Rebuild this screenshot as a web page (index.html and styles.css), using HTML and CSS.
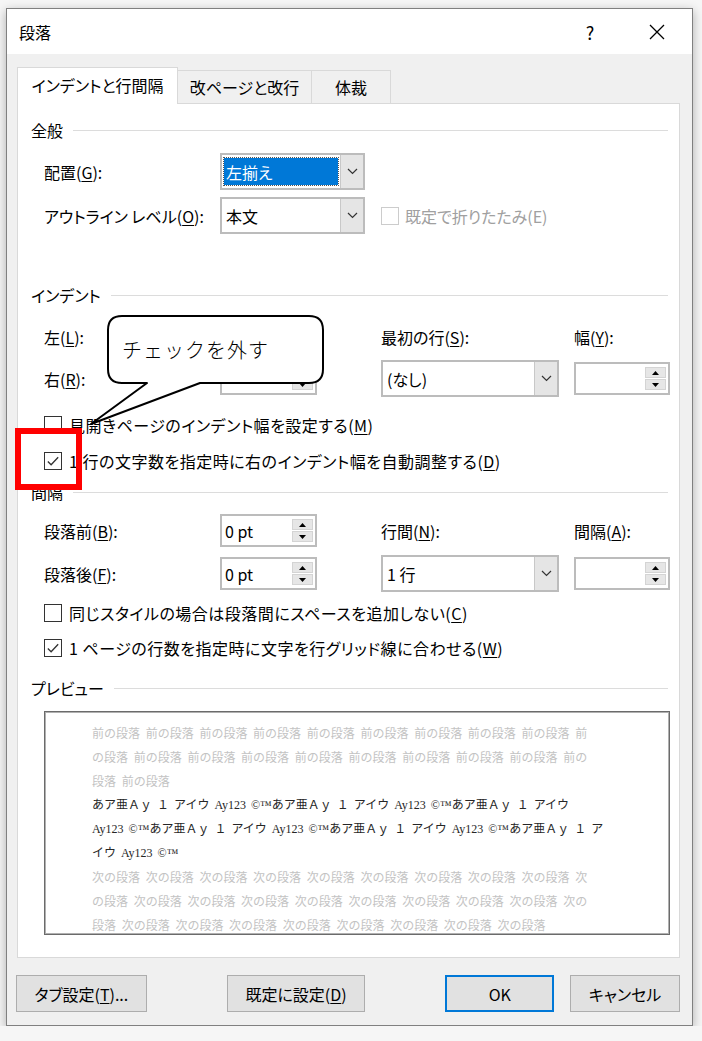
FILE: index.html
```html
<!DOCTYPE html>
<html lang="ja">
<head>
    <meta charset="UTF-8">
    <meta name="viewport" content="width=device-width, initial-scale=1.0">
    <title>段落</title>
    <link rel="stylesheet" href="styles.css">
</head>
<body>
    <div class="window">
        <!-- タイトルバー -->
        <div class="titlebar">
            <span class="title">段落</span>
            <span class="help">?</span>
            <span class="close">
                <svg width="16" height="16" viewBox="0 0 16 16"><path d="M1 1 L15 15 M15 1 L1 15" stroke="#000" stroke-width="1.3" fill="none"/></svg>
            </span>
        </div>

        <div class="content">
            <div class="tabs">
                <div class="tab active">インデントと行間隔</div>
                <div class="tab tab2">改ページと改行</div>
                <div class="tab tab3">体裁</div>
            </div>

            <div class="panel">
                <!-- 全般 -->
                <div class="group-head first">全般</div>
                <div class="grid general">
                    <span class="label">配置(<u>G</u>):</span>
                    <div class="combo short">
                        <span class="value"><span class="selected">左揃え</span></span>
                        <span class="arrow"><svg width="11" height="7" viewBox="0 0 11 7"><polyline points="1,1 5.5,5.5 10,1" stroke="#333" stroke-width="1.2" fill="none"/></svg></span>
                    </div>
                    <span class="label">アウトライン レベル(<u>O</u>):</span>
                    <div class="combo short">
                        <span class="value">本文</span>
                        <span class="arrow"><svg width="11" height="7" viewBox="0 0 11 7"><polyline points="1,1 5.5,5.5 10,1" stroke="#333" stroke-width="1.2" fill="none"/></svg></span>
                    </div>
                    <div class="check disabled wide">
                        <span class="box"></span>
                        <span>既定で折りたたみ(E)</span>
                    </div>
                </div>

                <!-- インデント -->
                <div class="group-head indent-head">インデント</div>
                <div class="grid indent">
                    <span class="label">左(<u>L</u>):</span>
                    <div class="spin">
                        <span class="num"></span>
                        <span class="btns">
                            <span class="sbtn"><svg width="7" height="4" viewBox="0 0 7 4"><polygon points="0,4 3.5,0 7,4" fill="#000"/></svg></span>
                            <span class="sbtn"><svg width="7" height="4" viewBox="0 0 7 4"><polygon points="0,0 3.5,4 7,0" fill="#000"/></svg></span>
                        </span>
                    </div>
                    <span class="label">最初の行(<u>S</u>):</span>
                    <span class="label">幅(<u>Y</u>):</span>

                    <span class="label">右(<u>R</u>):</span>
                    <div class="spin">
                        <span class="num"></span>
                        <span class="btns">
                            <span class="sbtn"><svg width="7" height="4" viewBox="0 0 7 4"><polygon points="0,4 3.5,0 7,4" fill="#000"/></svg></span>
                            <span class="sbtn"><svg width="7" height="4" viewBox="0 0 7 4"><polygon points="0,0 3.5,4 7,0" fill="#000"/></svg></span>
                        </span>
                    </div>
                    <div class="combo long">
                        <span class="value">(なし)</span>
                        <span class="arrow"><svg width="11" height="7" viewBox="0 0 11 7"><polyline points="1,1 5.5,5.5 10,1" stroke="#333" stroke-width="1.2" fill="none"/></svg></span>
                    </div>
                    <div class="spin last">
                        <span class="num"></span>
                        <span class="btns">
                            <span class="sbtn"><svg width="7" height="4" viewBox="0 0 7 4"><polygon points="0,4 3.5,0 7,4" fill="#000"/></svg></span>
                            <span class="sbtn"><svg width="7" height="4" viewBox="0 0 7 4"><polygon points="0,0 3.5,4 7,0" fill="#000"/></svg></span>
                        </span>
                    </div>
                </div>
                <div class="checks indent-checks">
                    <div class="check">
                        <span class="box"></span>
                        <span class="text">見開きページのインデント幅を設定する(<u>M</u>)</span>
                    </div>
                    <div class="check">
                        <span class="box"><svg width="17" height="17" viewBox="0 0 17 17"><polyline points="3,8.5 6.5,12 14,4" stroke="#333" stroke-width="1.4" fill="none"/></svg></span>
                        <span class="text">1 行の文字数を指定時に右のインデント幅を自動調整する(<u>D</u>)</span>
                    </div>
                </div>

                <!-- 間隔 -->
                <div class="group-head space-head">間隔</div>
                <div class="grid spacing">
                    <span class="label">段落前(<u>B</u>):</span>
                    <div class="spin">
                        <span class="num">0 pt</span>
                        <span class="btns">
                            <span class="sbtn"><svg width="7" height="4" viewBox="0 0 7 4"><polygon points="0,4 3.5,0 7,4" fill="#000"/></svg></span>
                            <span class="sbtn"><svg width="7" height="4" viewBox="0 0 7 4"><polygon points="0,0 3.5,4 7,0" fill="#000"/></svg></span>
                        </span>
                    </div>
                    <span class="label">行間(<u>N</u>):</span>
                    <span class="label">間隔(<u>A</u>):</span>

                    <span class="label">段落後(<u>F</u>):</span>
                    <div class="spin">
                        <span class="num">0 pt</span>
                        <span class="btns">
                            <span class="sbtn"><svg width="7" height="4" viewBox="0 0 7 4"><polygon points="0,4 3.5,0 7,4" fill="#000"/></svg></span>
                            <span class="sbtn"><svg width="7" height="4" viewBox="0 0 7 4"><polygon points="0,0 3.5,4 7,0" fill="#000"/></svg></span>
                        </span>
                    </div>
                    <div class="combo long">
                        <span class="value">1 行</span>
                        <span class="arrow"><svg width="11" height="7" viewBox="0 0 11 7"><polyline points="1,1 5.5,5.5 10,1" stroke="#333" stroke-width="1.2" fill="none"/></svg></span>
                    </div>
                    <div class="spin last">
                        <span class="num"></span>
                        <span class="btns">
                            <span class="sbtn"><svg width="7" height="4" viewBox="0 0 7 4"><polygon points="0,4 3.5,0 7,4" fill="#000"/></svg></span>
                            <span class="sbtn"><svg width="7" height="4" viewBox="0 0 7 4"><polygon points="0,0 3.5,4 7,0" fill="#000"/></svg></span>
                        </span>
                    </div>
                </div>
                <div class="checks space-checks">
                    <div class="check">
                        <span class="box"></span>
                        <span class="text">同じスタイルの場合は段落間にスペースを追加しない(<u>C</u>)</span>
                    </div>
                    <div class="check">
                        <span class="box"><svg width="17" height="17" viewBox="0 0 17 17"><polyline points="3,8.5 6.5,12 14,4" stroke="#333" stroke-width="1.4" fill="none"/></svg></span>
                        <span class="text">1 ページの行数を指定時に文字を行グリッド線に合わせる(<u>W</u>)</span>
                    </div>
                </div>

                <!-- プレビュー -->
                <div class="group-head preview-head">プレビュー</div>
                <div class="preview">
                    <div class="pline grey">前の段落 前の段落 前の段落 前の段落 前の段落 前の段落 前の段落 前の段落 前の段落 前</div>
                    <div class="pline grey">の段落 前の段落 前の段落 前の段落 前の段落 前の段落 前の段落 前の段落 前の段落 前の</div>
                    <div class="pline grey">段落 前の段落</div>
                    <div class="pline sample">あア亜Ａｙ １ アイウ Ay123 ©™あア亜Ａｙ １ アイウ Ay123 ©™あア亜Ａｙ １ アイウ</div>
                    <div class="pline sample">Ay123 ©™あア亜Ａｙ １ アイウ Ay123 ©™あア亜Ａｙ １ アイウ Ay123 ©™あア亜Ａｙ １ ア</div>
                    <div class="pline sample">イウ Ay123 ©™</div>
                    <div class="pline grey">次の段落 次の段落 次の段落 次の段落 次の段落 次の段落 次の段落 次の段落 次の段落 次</div>
                    <div class="pline grey">の段落 次の段落 次の段落 次の段落 次の段落 次の段落 次の段落 次の段落 次の段落 次の</div>
                    <div class="pline grey">段落 次の段落 次の段落 次の段落 次の段落 次の段落 次の段落 次の段落 次の段落</div>
                </div>
            </div>

            <div class="btn-row">
                <div class="btn b-tab">タブ設定(<u>T</u>)...</div>
                <div class="btn b-default">既定に設定(<u>D</u>)</div>
                <div class="btn b-ok">OK</div>
                <div class="btn b-cancel">キャンセル</div>
            </div>
        </div>

        <!-- 吹き出し -->
        <div class="callout">
            <svg width="250" height="115" viewBox="0 0 250 115">
                <path d="M42 2 H229 Q243 2 243 16 V55 Q243 69 229 69 H120 L11 110 L67 69 H42 Q28 69 28 55 V16 Q28 2 42 2 Z" fill="#fff" stroke="#000" stroke-width="2" stroke-linejoin="round"/>
            </svg>
            <span class="callout-text">チェックを外す</span>
        </div>
        <!-- 赤枠 -->
        <div class="redbox"></div>
    </div>
</body>
</html>
```

FILE: styles.css
```css
*{
    margin: 0;
    padding: 0;
    box-sizing: border-box;
}
body{
    background-color: #f6f6f6;
    font-family: "Noto Sans CJK JP", "Noto Sans", sans-serif;
    font-size: 16px;
    line-height: 20px;
    font-feature-settings: "palt";
    color: #000;
}
u{
    text-underline-offset: 2px;
}
.window{
    position: relative;
    margin: 8px 0 0 6px;
    width: 687px;
    height: 1018px;
    background-color: #f0f0f0;
    border: 1px solid #808080;
    box-shadow: 0 3px 10px rgba(0, 0, 0, 0.3);
}
.titlebar{
    display: flex;
    align-items: center;
    height: 45px;
    padding: 0 12px;
    background-color: #fff;
}
.title{
    flex: 1;
}
.help{
    width: 46px;
    text-align: center;
    font-size: 18px;
}
.close{
    width: 46px;
    margin-left: 21px;
    display: flex;
    justify-content: center;
}
.content{
    padding: 13px 12px 0 10px;
}
.tabs{
    display: flex;
    align-items: flex-end;
    height: 36px;
}
.tab{
    height: 33px;
    margin-left: -1px;
    display: flex;
    align-items: center;
    justify-content: center;
    border: 1px solid #d9d9d9;
    border-bottom: none;
    background-color: #f0f0f0;
}
.tab.active{
    position: relative;
    z-index: 1;
    width: 161px;
    height: 37px;
    margin-left: 0;
    margin-bottom: -1px;
    padding-bottom: 3px;
    background-color: #fff;
}
.tab2{
    width: 135px;
}
.tab3{
    width: 80px;
}
.panel{
    height: 855px;
    padding: 16px 11px 0 13px;
    background-color: #fff;
    border: 1px solid #d9d9d9;
}
.group-head{
    display: flex;
    align-items: center;
    height: 20px;
}
.group-head::after{
    content: '';
    flex: 1;
    height: 1px;
    margin-left: 10px;
    background-color: #dcdcdc;
}
.indent-head{
    margin-top: 51px;
}
.space-head{
    margin-top: 8px;
}
.preview-head{
    margin-top: 17px;
}
.grid{
    display: grid;
    grid-template-columns: 176px 161px 193px 96px;
    grid-auto-rows: 37px;
    align-items: center;
    margin-left: 13px;
}
.general{
    margin-top: 13px;
    row-gap: 7px;
}
.general .label{
    grid-column: 1;
}
.general .wide{
    grid-column: 3 / span 2;
}
.indent{
    margin-top: 13px;
    row-gap: 5px;
}
.spacing{
    margin-top: 10px;
    row-gap: 6px;
}
.combo{
    display: flex;
    height: 37px;
    background-color: #fff;
    border: 2px solid #bcbcbc;
}
.combo.short{
    width: 145px;
}
.combo.long{
    width: 178px;
}
.combo .value{
    flex: 1;
    display: flex;
    align-items: center;
    padding-left: 4px;
}
.combo .selected{
    flex: 1;
    align-self: stretch;
    margin: 3px 2px 3px -2px;
    padding-left: 2px;
    display: flex;
    align-items: center;
    color: #fff;
    background-color: #0078d7;
    outline: 1px dotted #555;
}
.combo .arrow{
    width: 23px;
    display: flex;
    align-items: center;
    justify-content: center;
    background-color: #e5e5e5;
    border-left: 1px solid #c8c8c8;
}
.spin{
    display: flex;
    width: 97px;
    height: 33px;
    background-color: #fff;
    border: 2px solid #bcbcbc;
}
.spin.last{
    width: 96px;
}
.spin .num{
    flex: 1;
    display: flex;
    align-items: center;
    padding-left: 3px;
}
.spin .btns{
    width: 23px;
    display: flex;
    flex-direction: column;
    gap: 1px;
    padding: 3px 2px 3px 0;
}
.sbtn{
    flex: 1;
    display: flex;
    align-items: center;
    justify-content: center;
    background-color: #e6e6e6;
    border: 1px solid #d4d4d4;
}
.checks{
    display: flex;
    flex-direction: column;
    margin-left: 13px;
}
.indent-checks{
    margin-top: 15px;
    gap: 10px;
}
.space-checks{
    margin-top: 8px;
    gap: 9px;
}
.check{
    display: flex;
    align-items: center;
    gap: 7px;
    height: 26px;
}
.check .text{
    letter-spacing: 0.5px;
}
.box{
    flex-shrink: 0;
    width: 18px;
    height: 18px;
    display: flex;
    align-items: center;
    justify-content: center;
    background-color: #fff;
    border: 1px solid #333;
}
.check.disabled{
    color: #a0a0a0;
    gap: 6px;
}
.check.disabled .box{
    border-color: #cccccc;
}
.preview{
    width: 626px;
    height: 224px;
    margin: 13px 0 0 13px;
    padding: 9px 0 0 47px;
    background-color: #fff;
    border: 1px solid #6b6b6b;
    box-shadow: inset 0 0 0 1px #b0b0b0;
    font-size: 12px;
    line-height: 24px;
    font-feature-settings: normal;
    white-space: nowrap;
}
.pline.grey{
    color: #c3c3c3;
    word-spacing: 3px;
}
.pline.sample{
    color: #262626;
    word-spacing: 2px;
    font-family: "Liberation Serif", "Noto Sans CJK JP", serif;
}
.btn-row{
    display: flex;
    margin: 17px 0 0 -1px;
}
.btn{
    height: 37px;
    display: flex;
    align-items: center;
    justify-content: center;
    background-color: #e1e1e1;
    border: 1px solid #adadad;
}
.b-tab{
    width: 131px;
}
.b-default{
    width: 139px;
    margin-left: 80px;
}
.b-ok{
    width: 109px;
    margin-left: 80px;
    border: 2px solid #0078d7;
}
.b-cancel{
    width: 110px;
    margin-left: 16px;
}
.callout{
    position: absolute;
    left: 73px;
    top: 305px;
    width: 250px;
    height: 115px;
    z-index: 2;
}
.callout svg{
    display: block;
}
.callout-text{
    position: absolute;
    left: 28px;
    top: 2px;
    width: 215px;
    height: 67px;
    padding-left: 14px;
    display: flex;
    align-items: center;
    font-size: 20px;
    font-weight: 300;
    letter-spacing: 1px;
    font-feature-settings: normal;
}
.redbox{
    position: absolute;
    left: 8px;
    top: 419px;
    width: 67px;
    height: 62px;
    border: 6px solid #ff0000;
    z-index: 3;
}
```
